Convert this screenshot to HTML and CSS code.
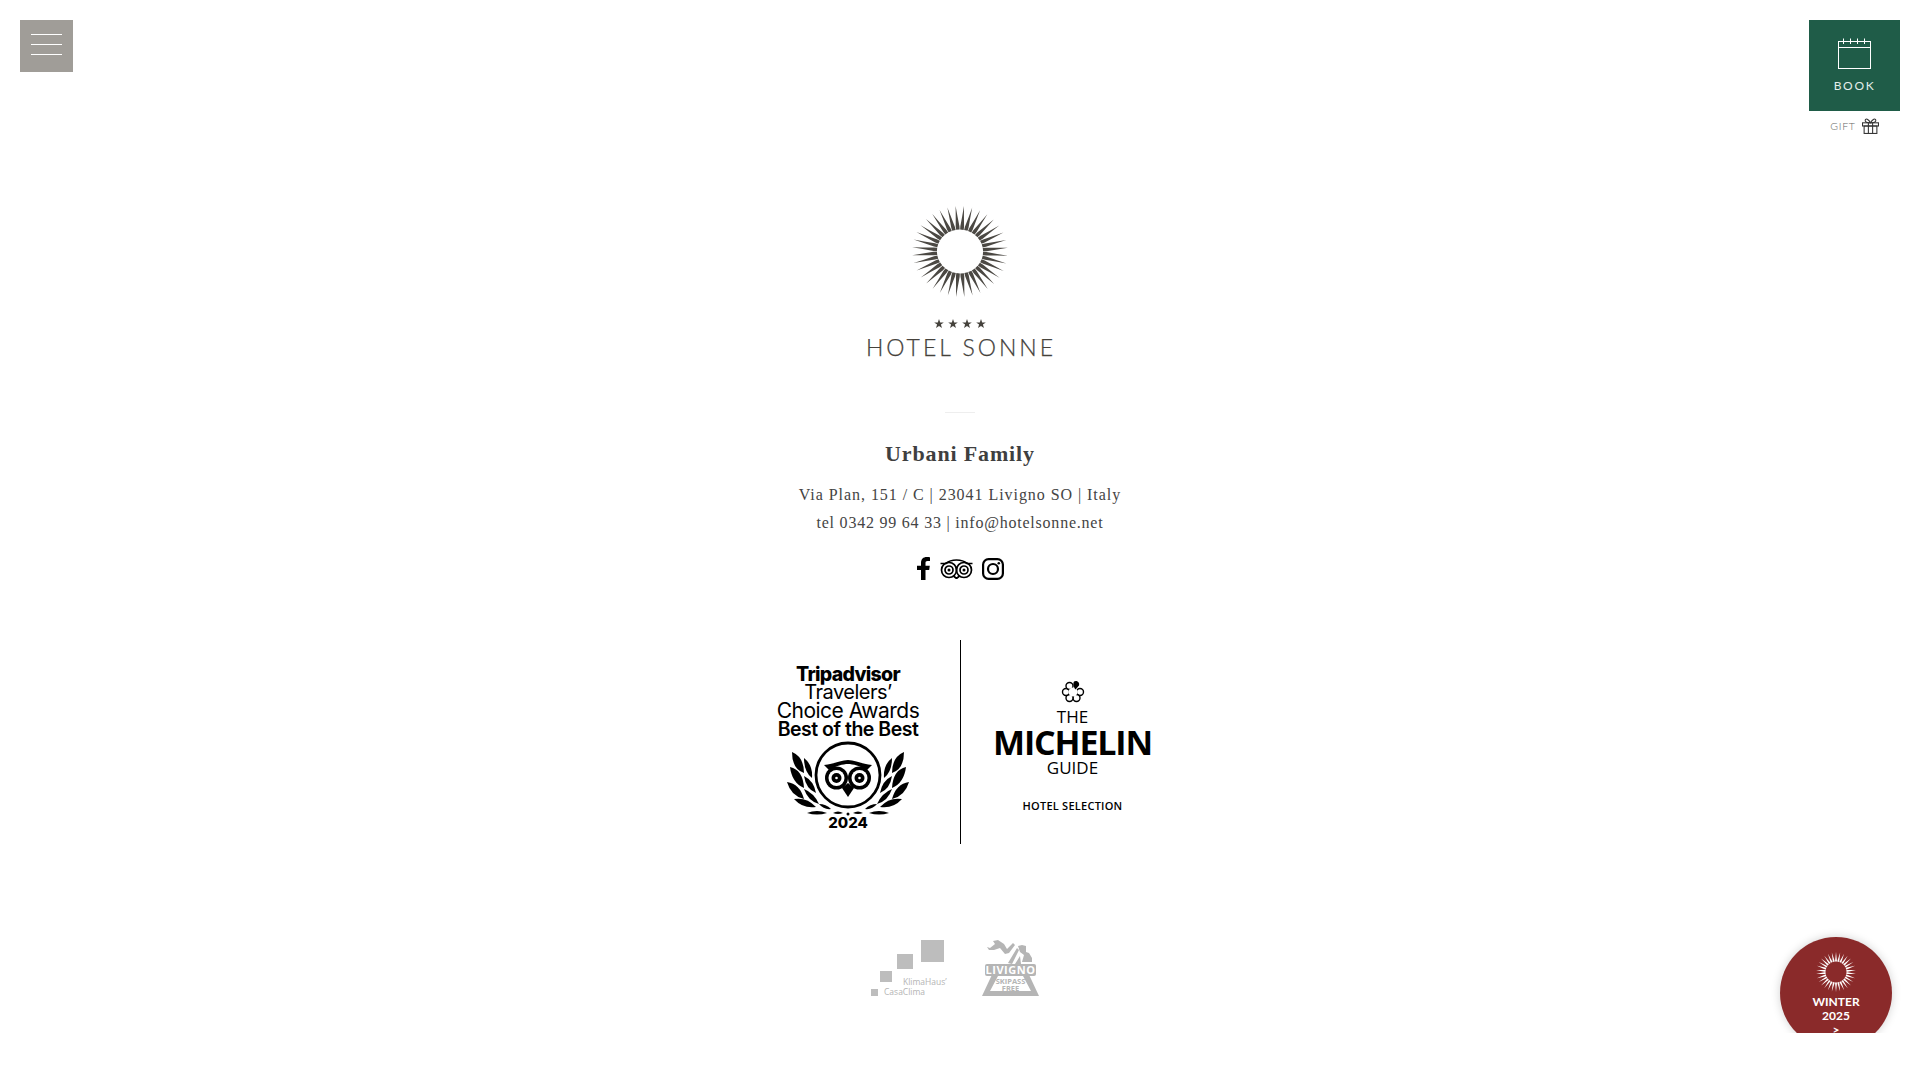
FILE: index.html
```html
<!DOCTYPE html>
<html lang="en">
<head>
<meta charset="utf-8">
<title>Hotel Sonne</title>
<link rel="stylesheet" href="styles.css">
</head>
<body>
<button class="menu-btn" aria-label="Menu"><span></span><span></span><span></span></button>

<aside class="book-box">
  <a class="book-panel" href="#">
    <svg class="cal" viewBox="0 0 33 31" width="33" height="31" fill="none" stroke="#fff" stroke-width="1">
      <rect x="0.5" y="3.5" width="32" height="27"/>
      <path d="M0.5 9.500H32.500M5.500 0.500V6M12.500 0.500V6M19.500 0.500V6M26.500 0.500V6"/>
    </svg>
    <span class="book-label">BOOK</span>
  </a>
  <a class="gift" href="#">
    <span>GIFT</span>
    <svg viewBox="0 0 16 15" width="17" height="16" fill="none" stroke="#333" stroke-width="1">
      <rect x="0.500" y="4.500" width="15" height="3"/>
      <rect x="2" y="7.500" width="12" height="7"/>
      <path d="M6 4.500V14.500M10 4.500V14.500M8 4.500C6 1 3.500 0 3 2C2.600 3.800 5 4.500 8 4.500C11 4.500 13.400 3.800 13 2C12.500 0 10 1 8 4.500Z"/>
    </svg>
  </a>
</aside>

<main class="page">
  <svg class="logo" viewBox="0 0 200 160" width="200" height="160">
    <defs>
      <polygon id="ray" points="-1.800,-23.500 -1.900,-27 -0.900,-38 0,-49 0.900,-38 1.900,-27 1.800,-23.500" fill="#4b4843"/>
      <g id="sun-rays">
        <use href="#ray" transform="rotate(0)"/><use href="#ray" transform="rotate(10)"/><use href="#ray" transform="rotate(20)"/><use href="#ray" transform="rotate(30)"/><use href="#ray" transform="rotate(40)"/><use href="#ray" transform="rotate(50)"/><use href="#ray" transform="rotate(60)"/><use href="#ray" transform="rotate(70)"/><use href="#ray" transform="rotate(80)"/>
        <use href="#ray" transform="rotate(90)"/><use href="#ray" transform="rotate(100)"/><use href="#ray" transform="rotate(110)"/><use href="#ray" transform="rotate(120)"/><use href="#ray" transform="rotate(130)"/><use href="#ray" transform="rotate(140)"/><use href="#ray" transform="rotate(150)"/><use href="#ray" transform="rotate(160)"/><use href="#ray" transform="rotate(170)"/>
        <use href="#ray" transform="rotate(180)"/><use href="#ray" transform="rotate(190)"/><use href="#ray" transform="rotate(200)"/><use href="#ray" transform="rotate(210)"/><use href="#ray" transform="rotate(220)"/><use href="#ray" transform="rotate(230)"/><use href="#ray" transform="rotate(240)"/><use href="#ray" transform="rotate(250)"/><use href="#ray" transform="rotate(260)"/>
        <use href="#ray" transform="rotate(270)"/><use href="#ray" transform="rotate(280)"/><use href="#ray" transform="rotate(290)"/><use href="#ray" transform="rotate(300)"/><use href="#ray" transform="rotate(310)"/><use href="#ray" transform="rotate(320)"/><use href="#ray" transform="rotate(330)"/><use href="#ray" transform="rotate(340)"/><use href="#ray" transform="rotate(350)"/>
      </g>
      <polygon id="star" points="0,-5 1.200,-1.600 4.800,-1.500 1.900,0.600 3,4 0,2 -3,4 -1.900,0.600 -4.800,-1.500 -1.200,-1.600" fill="#45423c"/>
    </defs>
    <use href="#sun-rays" transform="translate(100 46.500) rotate(5) scale(0.98 0.93)"/>
    <use href="#star" x="79" y="119"/><use href="#star" x="93" y="119"/><use href="#star" x="107" y="119"/><use href="#star" x="121" y="119"/>
    <text class="logo-name" x="6" y="151" textLength="187" lengthAdjust="spacing">HOTEL SONNE</text>
  </svg>

  <div class="divider"></div>

  <h1 class="family">Urbani Family</h1>
  <p class="address"><span class="addr-1">Via Plan, 151 / C | 23041 Livigno SO | Italy</span><br><span class="addr-2">tel 0342 99 64 33 | info@hotelsonne.net</span></p>

  <nav class="social">
    <svg viewBox="0 0 13 23" width="13" height="23"><path d="M4 23V13H0V8.800H4V6C4 2 6.300 0 9.700 0C11.200 0 12.400 .1 13 .2V4H10.600C8.900 4 8.500 4.900 8.500 6.100V8.800H12.800L12.200 13H8.500V23Z"/></svg>
    <svg viewBox="0 0 33 20" width="33" height="20" fill="none" stroke="#000" stroke-width="1.700">
      <path d="M.5 4.500H6C9 1.800 12.500 1 16.500 1C20.500 1 24 1.800 27 4.500H32.500"/>
      <circle cx="9" cy="11" r="7.500"/><circle cx="24" cy="11" r="7.500"/>
      <circle cx="9" cy="11" r="4"/><circle cx="24" cy="11" r="4"/>
      <circle cx="9" cy="11" r="1.500" fill="#000" stroke="none"/><circle cx="24" cy="11" r="1.500" fill="#000" stroke="none"/>
      <path d="M13.500 17L16.500 19.500L19.500 17"/>
    </svg>
    <svg class="s-ig" viewBox="0 0 22 22" width="22" height="22" fill="none" stroke="#000" stroke-width="2.200">
      <rect x="1.100" y="1.100" width="19.800" height="19.800" rx="5.500"/>
      <circle cx="11" cy="11" r="5"/>
      <circle cx="16.800" cy="5.200" r="1.300" fill="#000" stroke="none"/>
    </svg>
  </nav>

  <section class="awards">
    <div class="award award-ta">
      <div class="ta-text">
        <strong>Tripadvisor</strong>
        <span class="ta-trav">Travelers’</span>
        <span class="ta-choice">Choice Awards</span>
        <b>Best of the Best</b>
      </div>
      <svg class="ta-emblem" viewBox="-65 -36 130 78" width="130" height="78">
        <defs>
          <g id="laurel">
            <path d="M-56-23Q-44-18-44-2Q-56-6-56-23Z"/>
            <path d="M-44-17Q-35-10-36 3Q-44-3-44-17Z"/>
            <path d="M-58-8Q-45-5-44 13Q-56 8-58-8Z"/>
            <path d="M-44 1Q-34 6-32 18Q-42 14-44 1Z"/>
            <path d="M-61 7Q-48 9-44 24Q-57 21-61 7Z"/>
            <path d="M-44 14Q-34 18-29 29Q-40 26-44 14Z"/>
            <path d="M-54 24Q-41 22-32 32Q-45 34-54 24Z"/>
            <path d="M-29 29Q-22 29-17 34Q-24 35-29 29Z"/>
            <path d="M-41 38Q-31 34-21 38Q-31 41-41 38Z"/>
            <path d="M-15 38Q-10 35-5 38Q-10 40-15 38Z"/>
          </g>
        </defs>
        <use href="#laurel"/>
        <use href="#laurel" transform="scale(-1 1)"/>
        <circle cx="0" cy="39" r="1.500"/>
        <circle cx="0" cy="0" r="32" fill="none" stroke="#000" stroke-width="2.800"/>
        <path d="M-24-10C-14-11-7-15 0-15C7-15 14-11 24-10L19-5C12-9 5-11 0-11C-5-11-12-9-19-5Z"/>
        <path d="M-6 13L0 22L6 13L0 8Z"/>
        <circle cx="-11.500" cy="3" r="11.500"/><circle cx="11.500" cy="3" r="11.500"/>
        <circle cx="-11.500" cy="3" r="8" fill="#fff"/><circle cx="11.500" cy="3" r="8" fill="#fff"/>
        <circle cx="-11.500" cy="3" r="5"/><circle cx="11.500" cy="3" r="5"/>
        <circle cx="-11.500" cy="3" r="1.300" fill="#fff"/><circle cx="11.500" cy="3" r="1.300" fill="#fff"/>
      </svg>
      <div class="ta-year">2024</div>
    </div>
    <div class="award award-mi">
      <svg class="mi-flower" viewBox="-12 -12 24 24" width="24" height="24">
        <g fill="#fff" stroke="#000" stroke-width="1.400">
          <circle cx="7" cy="0" r="3.500"/><circle cx="3.500" cy="6" r="3.500"/><circle cx="-3.500" cy="6" r="3.500"/>
          <circle cx="-7" cy="0" r="3.500"/><circle cx="-3.500" cy="-6" r="3.500"/>
        </g>
        <circle cx="0" cy="0" r="4.500" fill="#fff"/>
        <path d="M1-10.500C3-12 7-10.500 6-6.500L2.500-2.500C1-4 -0.500-8 1-10.500Z"/>
      </svg>
      <div class="mi-the">THE</div>
      <div class="mi-name">MICHELIN</div>
      <div class="mi-the">GUIDE</div>
      <div class="mi-sel">HOTEL SELECTION</div>
    </div>
  </section>

  <div class="partners">
    <svg viewBox="0 0 78 60" width="78" height="60">
      <g fill="#bdbdbd">
        <rect x="51" y="2" width="23" height="22"/>
        <rect x="27" y="16" width="16" height="15"/>
        <rect x="10" y="33" width="12" height="11"/>
        <rect x="1" y="51" width="7" height="7"/>
      </g>
      <text class="klima" x="33" y="47">KlimaHaus’</text>
      <text class="klima" x="14" y="57">CasaClima</text>
    </svg>
    <svg viewBox="0 0 59 60" width="59" height="60">
      <g fill="#b5b5b5">
        <path d="M5 9L8 10L13 6L11 3L16 2L22 6L25 11L31 5L33 7L27 15L23 16L18 10L12 12L7 12Z"/>
        <path d="M36 8L40 7L44 8L44 14L47 15L50 20V24H40L42 17L38 14Z"/>
        <path d="M26 25L35 10L37 12L30 26ZM33 26L38 18L39 26Z"/>
        <path d="M15 26H42L57 58H0ZM16 38L8 53H49L41 38Z" fill-rule="evenodd"/>
        <rect x="3" y="26" width="51" height="12" rx="2"/>
      </g>
      <text class="liv-main" x="28.500" y="36" text-anchor="middle">LIVIGNO</text>
      <text class="liv-sub" x="28.500" y="46" text-anchor="middle">SKIPASS</text>
      <text class="liv-sub" x="28.500" y="52.500" text-anchor="middle">FREE</text>
    </svg>
  </div>
</main>

<div class="winter-clip">
  <a class="winter" href="#">
    <svg viewBox="-20 -20 40 40" width="40" height="40">
      <defs><polygon id="wray" points="-1,-10.500 0,-20 1,-10.500" fill="#fff"/></defs>
      <use href="#wray" transform="rotate(0)"/><use href="#wray" transform="rotate(12)"/><use href="#wray" transform="rotate(24)"/><use href="#wray" transform="rotate(36)"/><use href="#wray" transform="rotate(48)"/><use href="#wray" transform="rotate(60)"/><use href="#wray" transform="rotate(72)"/><use href="#wray" transform="rotate(84)"/><use href="#wray" transform="rotate(96)"/><use href="#wray" transform="rotate(108)"/>
      <use href="#wray" transform="rotate(120)"/><use href="#wray" transform="rotate(132)"/><use href="#wray" transform="rotate(144)"/><use href="#wray" transform="rotate(156)"/><use href="#wray" transform="rotate(168)"/><use href="#wray" transform="rotate(180)"/><use href="#wray" transform="rotate(192)"/><use href="#wray" transform="rotate(204)"/><use href="#wray" transform="rotate(216)"/><use href="#wray" transform="rotate(228)"/>
      <use href="#wray" transform="rotate(240)"/><use href="#wray" transform="rotate(252)"/><use href="#wray" transform="rotate(264)"/><use href="#wray" transform="rotate(276)"/><use href="#wray" transform="rotate(288)"/><use href="#wray" transform="rotate(300)"/><use href="#wray" transform="rotate(312)"/><use href="#wray" transform="rotate(324)"/><use href="#wray" transform="rotate(336)"/><use href="#wray" transform="rotate(348)"/>
    </svg>
    <span class="winter-text">WINTER<br>2025<br>&gt;</span>
  </a>
</div>
</body>
</html>
```

FILE: styles.css
```css
* { box-sizing: border-box; }
html, body { margin: 0; padding: 0; height: 100%; overflow: hidden; background: #fff; }
body { position: relative; font-family: "Liberation Serif", serif; color: #333; }
a { color: inherit; text-decoration: none; }

.menu-btn {
  position: absolute; top: 20px; left: 20px;
  width: 53px; height: 52px; padding: 14px 0 0;
  background: #a09d98; border: 0;
  display: flex; flex-direction: column; align-items: center; gap: 9px;
}
.menu-btn span { display: block; width: 31px; height: 1px; background: #fff; }

.book-box {
  position: absolute; top: 20px; right: 20px; width: 91px;
  display: flex; flex-direction: column; align-items: center;
  font-family: Lato, sans-serif;
}
.book-panel {
  width: 91px; height: 91px; background: #1f5c48;
  display: flex; flex-direction: column; align-items: center;
  padding-top: 18px;
}
.book-label { margin-top: 9px; font-size: 12px; line-height: 16px; letter-spacing: 1.7px; color: #e3eeea; font-weight: 400; }
.gift { margin-top: 7px; display: flex; align-items: center; gap: 6px; font-size: 10.500px; line-height: 15px; letter-spacing: .7px; color: #666; font-weight: 300; }

.page { display: flex; flex-direction: column; align-items: center; padding-top: 205px; }
.logo { display: block; }
.logo-name { font-family: Lato, sans-serif; font-weight: 300; font-size: 23px; fill: #45423c; stroke: #45423c; stroke-width: .25px; }

.divider { width: 30px; height: 1px; margin-top: 47px; background: #eeeeee; }
.family { margin: 26px 0 0; font-size: 22px; line-height: 30px; font-weight: 700; letter-spacing: .85px; color: #3f3f3f; }
.address { margin: 12px 0 0; font-size: 16px; line-height: 28px; text-align: center; color: #444; }
.addr-1 { letter-spacing: .95px; }
.addr-2 { letter-spacing: .78px; }

.social { margin-top: 20px; display: flex; align-items: center; gap: 10px; height: 23px; }
.social svg { display: block; }
.s-ig { margin-left: -1px; }

.awards { margin-top: 60px; display: flex; height: 204px; }
.award { width: 222px; display: flex; flex-direction: column; align-items: center; color: #000; font-family: Inter, sans-serif; }
.award-ta { border-right: 1px solid #000; width: 223px; margin-left: 1px; padding-top: 25px; padding-right: 2px; }
.ta-text { display: flex; flex-direction: column; align-items: center; font-size: 19.500px; line-height: 18.400px; letter-spacing: -.5px; white-space: nowrap; }
.ta-text strong { font-weight: 800; letter-spacing: -.7px; }
.ta-trav { font-weight: 400; font-size: 20px; }
.ta-choice { font-weight: 400; font-size: 21px; }
.ta-text b { font-weight: 600; }
.ta-emblem { display: block; margin-top: 0; }
.ta-year { font-size: 15px; line-height: 16px; font-weight: 800; margin-top: -2px; }

.award-mi { padding-top: 40px; font-family: "Open Sans", sans-serif; padding-left: 1px; }
.mi-flower { display: block; }
.mi-the { font-size: 17px; line-height: 18px; font-weight: 400; }
.mi-flower + .mi-the { margin-top: 4px; }
.mi-name { font-size: 34px; line-height: 34px; font-weight: 700; margin: -1px 0 0; letter-spacing: -1.150px; }
.mi-sel { margin-top: 22px; font-size: 11px; line-height: 14px; font-weight: 600; letter-spacing: .25px; }

.partners { margin-top: 94px; display: flex; gap: 34px; padding-right: 9px; }
.partners svg { display: block; }
.klima { font-family: "Open Sans", sans-serif; font-size: 8.500px; fill: #b4b4b4; }
.liv-main { font-family: "Open Sans", sans-serif; font-size: 11px; font-weight: 700; fill: #fff; letter-spacing: .5px; }
.liv-sub { font-family: "Open Sans", sans-serif; font-size: 7.500px; font-weight: 700; fill: #b5b5b5; }

.winter-clip { position: absolute; top: 920px; right: 0; width: 150px; height: 113px; overflow: hidden; }
.winter {
  position: absolute; top: 17px; left: 10px;
  width: 112px; height: 112px; border-radius: 50%;
  background: #8a2a2a; box-shadow: 0 0 10px rgba(0,0,0,.18);
  display: flex; flex-direction: column; align-items: center; padding-top: 15px;
  font-family: Lato, sans-serif; color: #fff;
}
.winter svg { display: block; }
.winter-text { margin-top: 3px; font-size: 12px; line-height: 14px; font-weight: 700; text-align: center; }
```
